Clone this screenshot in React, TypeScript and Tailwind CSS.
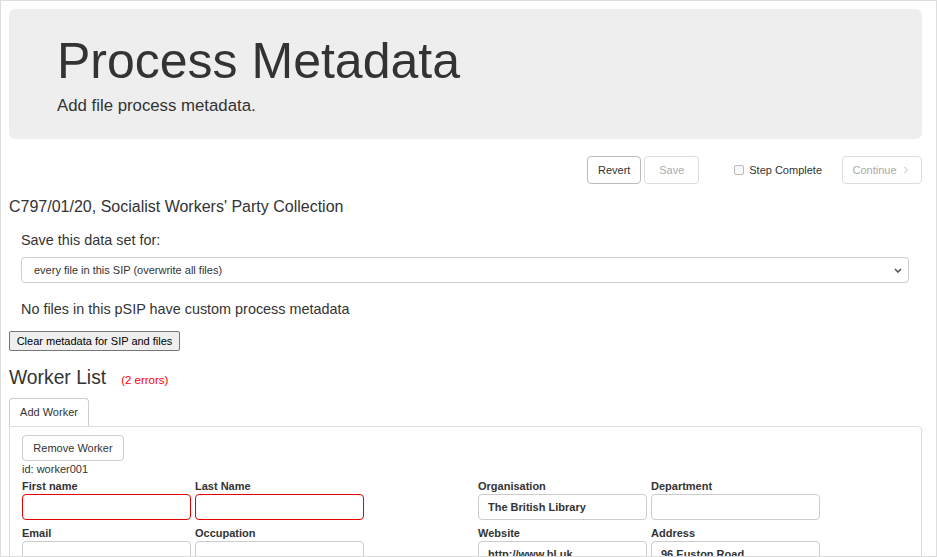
import React from "react";
import { ChevronRight } from "lucide-react";

type Field = { label: string; value?: string; error?: boolean };

const leftFields: Field[] = [
  { label: "First name", error: true },
  { label: "Last Name", error: true },
  { label: "Email" },
  { label: "Occupation" },
];

const rightFields: Field[] = [
  { label: "Organisation", value: "The British Library" },
  { label: "Department" },
  { label: "Website", value: "http://www.bl.uk" },
  { label: "Address", value: "96 Euston Road" },
];

function FieldGroup({ fields }: { fields: Field[] }) {
  return (
    <div className="grid grid-cols-[169px_169px] gap-x-[4px] gap-y-[6px]">
      {fields.map((f) => (
        <label key={f.label} className="block">
          <span className="block text-[11px] font-bold leading-[15px]">{f.label}</span>
          <input
            type="text"
            defaultValue={f.value ?? ""}
            className={`block h-[26px] w-full rounded-[4px] border bg-white px-[9px] text-[11px] font-bold text-[#333] outline-none ${
              f.error ? "border-[#e60000]" : "border-[#ccc]"
            }`}
          />
        </label>
      ))}
    </div>
  );
}

function App() {
  return (
    <div className="h-[557px] w-[937px] overflow-hidden border border-[#ddd] bg-white pl-2 pr-[14px] pt-2 font-['Liberation_Sans',Arial,sans-serif] text-[#333]">
      <div className="h-[130px] rounded-md bg-[#eee] pl-12 pt-6">
        <h1 className="text-[50px] leading-[56px]">Process Metadata</h1>
        <p className="mt-[5px] text-[16.8px] leading-6">Add file process metadata.</p>
      </div>

      <div className="mt-[17px] flex h-7 items-center justify-end text-[11px]">
        <button className="h-7 w-[54px] rounded-[4px] border border-[#bbb] bg-white text-[#333]">Revert</button>
        <button disabled className="ml-[3px] h-7 w-[55px] rounded-[4px] border border-[#ddd] bg-white text-[#aaa]">
          Save
        </button>
        <span className="ml-[35px] h-[10px] w-[10px] rounded-[2px] border border-[#bbb] bg-[#f8f8f8]"></span>
        <span className="ml-[5px]">Step Complete</span>
        <button
          disabled
          className="ml-[20px] flex h-7 w-[80px] items-center justify-center gap-[3px] rounded-[4px] border border-[#ddd] bg-white text-[#aaa]"
        >
          Continue
          <ChevronRight size={12} strokeWidth={1.5} />
        </button>
      </div>

      <h2 className="mt-3 text-[16px] leading-[22px]">C797/01/20, Socialist Workers' Party Collection</h2>

      <div className="pl-3">
        <p className="mt-3 text-[14.4px] leading-5">Save this data set for:</p>
        <div className="relative mt-[7px] w-[888px]">
          <select className="block h-[26px] w-full appearance-none rounded-[4px] border border-[#ccc] bg-white pl-3 text-[11px] text-[#333] outline-none">
            <option>every file in this SIP (overwrite all files)</option>
          </select>
          <svg
            className="pointer-events-none absolute right-[7px] top-[11px]"
            width="8"
            height="5"
            viewBox="0 0 8 5"
            fill="none"
          >
            <path d="M1 1l3 3 3-3" stroke="#555" strokeWidth="1.6" />
          </svg>
        </div>
        <p className="mt-4 text-[14.4px] leading-5">No files in this pSIP have custom process metadata</p>
      </div>

      <button className="mt-3 h-5 w-[171px] rounded-[2px] border border-[#767676] bg-[#efefef] text-[11px] text-black">
        Clear metadata for SIP and files
      </button>

      <div className="mt-[14px] flex items-baseline">
        <h3 className="text-[19.3px] leading-6">Worker List</h3>
        <span className="ml-[15px] text-[11.5px] text-[#f00]">(2 errors)</span>
      </div>

      <button className="mt-[8px] block h-7 w-[80px] rounded-t-[4px] border border-b-0 border-[#ccc] bg-white text-[11px]">
        Add Worker
      </button>

      <div className="h-[200px] rounded-tr-[4px] border border-[#ddd] px-3 pt-2">
        <button className="h-[26px] w-[102px] rounded-[4px] border border-[#ccc] bg-white text-[11px]">
          Remove Worker
        </button>
        <p className="mt-px text-[11px] leading-[15px]">id: worker001</p>
        <div className="mt-[2px] flex">
          <div className="w-[456px]">
            <FieldGroup fields={leftFields} />
          </div>
          <FieldGroup fields={rightFields} />
        </div>
      </div>
    </div>
  );
}

export default App;
